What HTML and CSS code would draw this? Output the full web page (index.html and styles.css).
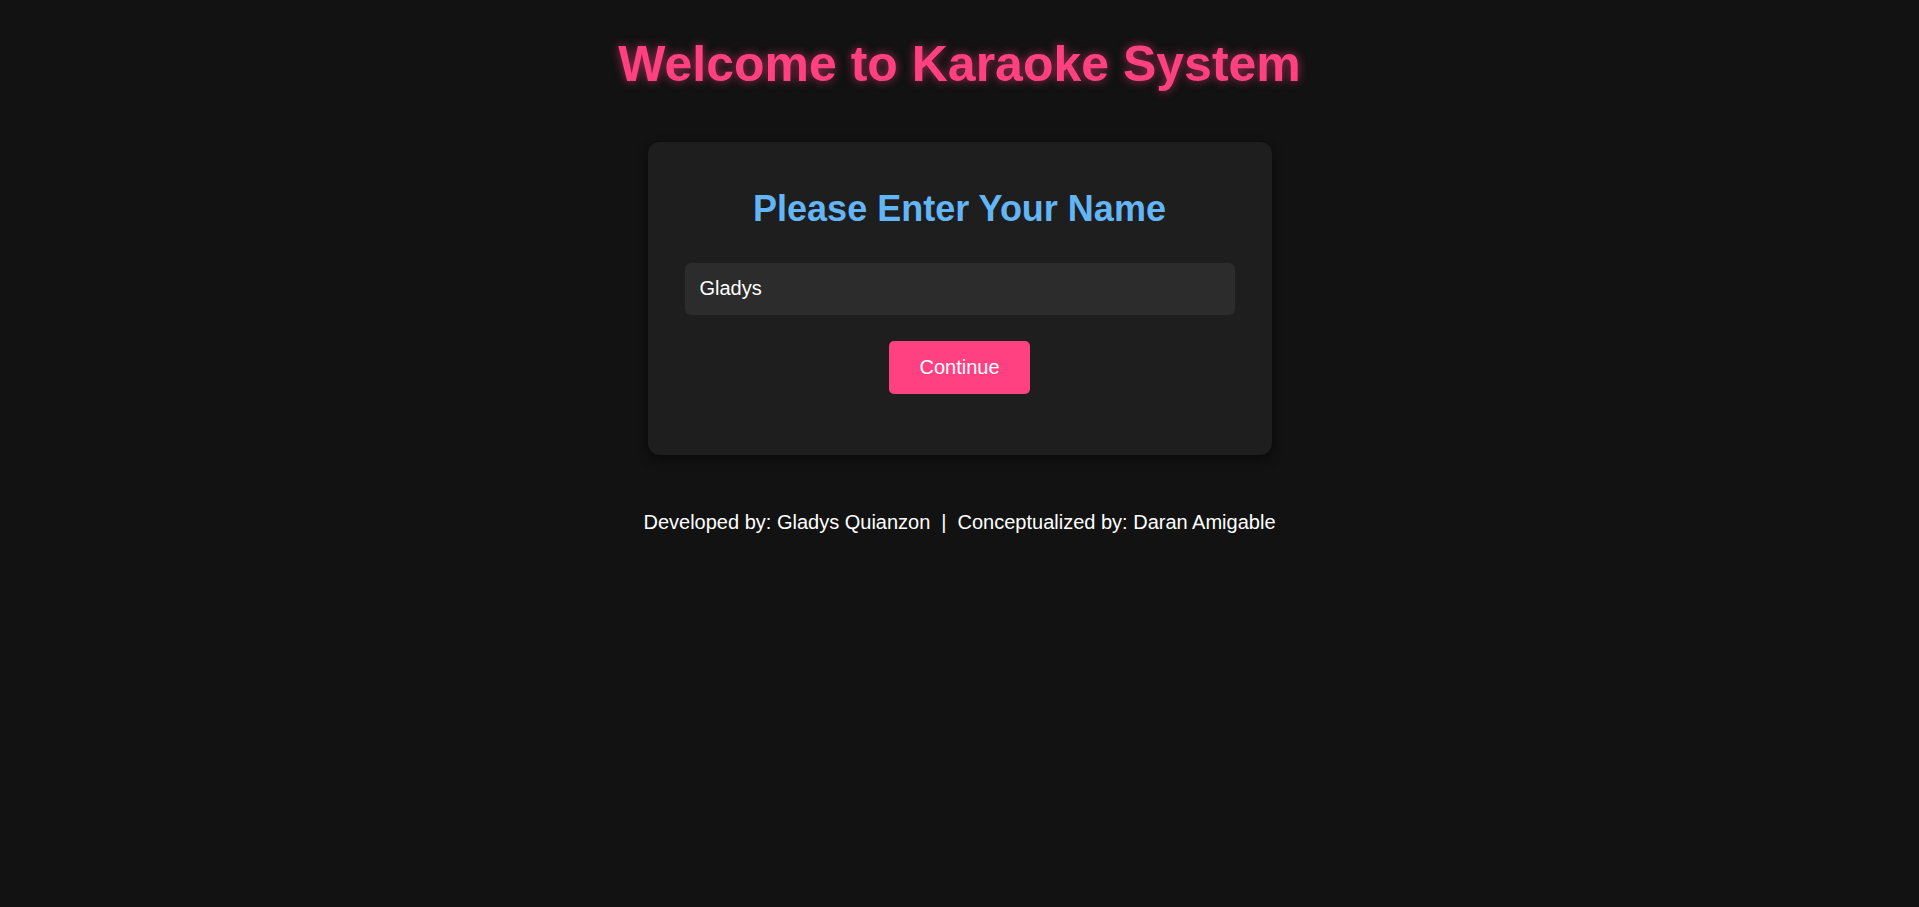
FILE: index.html
```html
<!DOCTYPE html>
<html lang="en">
<head>
<meta charset="utf-8">
<title>Karaoke System</title>
<link rel="stylesheet" href="styles.css">
</head>
<body>
<main class="page">
  <h1 class="title">Welcome to Karaoke System</h1>
  <section class="card">
    <h2 class="card-title">Please Enter Your Name</h2>
    <input class="name-input" type="text" value="Gladys">
    <button class="btn" type="button">Continue</button>
  </section>
  <footer class="footer">Developed by: Gladys Quianzon<span class="sep">|</span>Conceptualized by: Daran Amigable</footer>
</main>
</body>
</html>
```

FILE: styles.css
```css
html, body {
  margin: 0;
  padding: 0;
  background: #121212;
  color: #ffffff;
  font-family: "Liberation Sans", Arial, sans-serif;
}

.page {
  display: flex;
  flex-direction: column;
  align-items: center;
  padding-top: 36px;
}

.title {
  margin: 0 0 48px;
  font-size: 50px;
  line-height: 1.15;
  font-weight: 700;
  color: #ff4081;
  text-shadow: 0 0 10px rgba(255, 64, 129, 0.6);
}

.card {
  box-sizing: border-box;
  width: 624px;
  padding: 46px 37px 61px;
  background: #1e1e1e;
  border-radius: 12px;
  box-shadow: 0 4px 12px rgba(0, 0, 0, 0.45);
  display: flex;
  flex-direction: column;
  align-items: center;
}

.card-title {
  margin: 0 0 34px;
  font-size: 36px;
  line-height: 1.15;
  font-weight: 700;
  color: #64b5f6;
}

.name-input {
  box-sizing: border-box;
  width: 100%;
  height: 52px;
  padding: 0 15px;
  border: none;
  outline: none;
  border-radius: 6px;
  background: #2c2c2c;
  color: #ffffff;
  font-family: "Liberation Sans", Arial, sans-serif;
  font-size: 20px;
  margin: 0 0 26px;
}

.btn {
  box-sizing: border-box;
  height: 53px;
  padding: 0 30px;
  border: none;
  border-radius: 5px;
  background: #ff4081;
  color: #ffffff;
  font-family: "Liberation Sans", Arial, sans-serif;
  font-size: 20px;
  cursor: pointer;
}

.footer {
  margin-top: 56px;
  font-size: 20px;
  line-height: 23px;
  color: #ffffff;
}

.sep {
  margin: 0 11px;
}
```
